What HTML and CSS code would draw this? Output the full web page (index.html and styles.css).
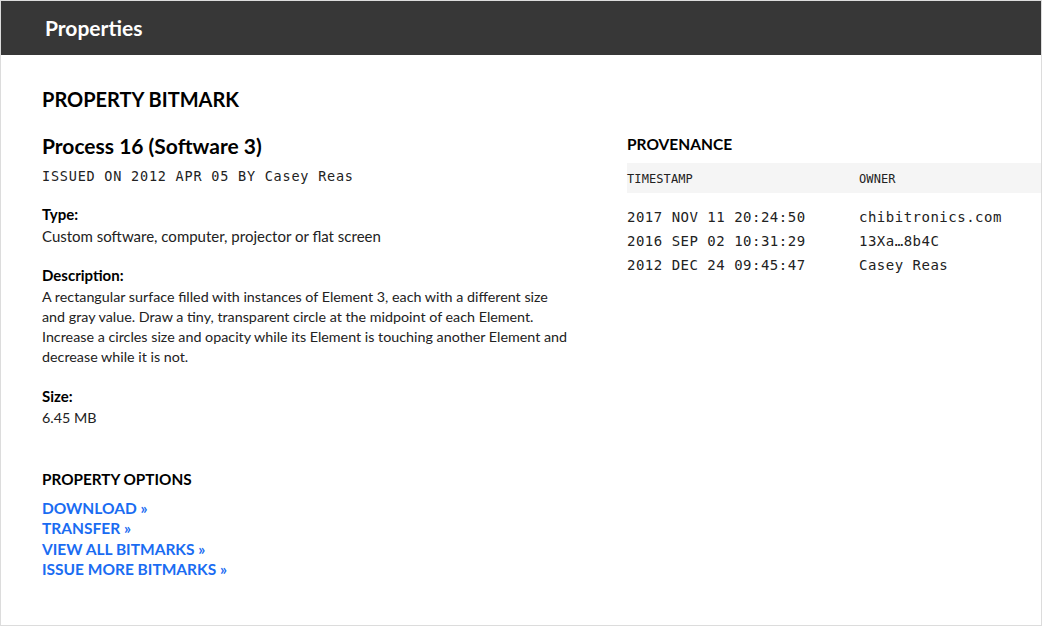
FILE: index.html
```html
<!DOCTYPE html>
<html>
<head>
<meta charset="utf-8">
<link rel="stylesheet" href="styles.css">
</head>
<body>
<div class="frame">
  <header class="topbar"><h1 class="topbar-title">Properties</h1></header>
  <main class="content">
    <h2 class="page-title">PROPERTY BITMARK</h2>
    <div class="columns">
      <section class="details">
        <h3 class="work-title">Process 16 (Software 3)</h3>
        <p class="issued">ISSUED ON 2012 APR 05 BY Casey Reas</p>
        <div class="field">
          <div class="field-label">Type:</div>
          <div class="field-value field-value-lg">Custom software, computer, projector or flat screen</div>
        </div>
        <div class="field">
          <div class="field-label">Description:</div>
          <div class="field-value field-value-desc">A rectangular surface filled with instances of Element 3, each with a different size and gray value. Draw a tiny, transparent circle at the midpoint of each Element. Increase a circles size and opacity while its Element is touching another Element and decrease while it is not.</div>
        </div>
        <div class="field">
          <div class="field-label">Size:</div>
          <div class="field-value">6.45 MB</div>
        </div>
        <h4 class="options-title">PROPERTY OPTIONS</h4>
        <ul class="options">
          <li><a href="#">DOWNLOAD »</a></li>
          <li><a href="#">TRANSFER »</a></li>
          <li><a href="#">VIEW ALL BITMARKS »</a></li>
          <li><a href="#">ISSUE MORE BITMARKS »</a></li>
        </ul>
      </section>
      <section class="provenance">
        <h4 class="prov-title">PROVENANCE</h4>
        <div class="prov-head">
          <span class="col-ts">TIMESTAMP</span>
          <span class="col-owner">OWNER</span>
        </div>
        <div class="prov-rows">
          <div class="prov-row"><span class="col-ts">2017 NOV 11 20:24:50</span><span class="col-owner">chibitronics.com</span></div>
          <div class="prov-row"><span class="col-ts">2016 SEP 02 10:31:29</span><span class="col-owner">13Xa…8b4C</span></div>
          <div class="prov-row"><span class="col-ts">2012 DEC 24 09:45:47</span><span class="col-owner">Casey Reas</span></div>
        </div>
      </section>
    </div>
  </main>
</div>
</body>
</html>
```
FILE: styles.css
```css
* { box-sizing: border-box; }
html, body { margin: 0; padding: 0; background: #fff; }
body { font-family: Lato, "Noto Sans", sans-serif; color: #111; }
.frame {
  width: 1042px;
  height: 626px;
  border: 1px solid #dcdcdc;
  background: #fff;
}
.topbar {
  height: 54px;
  background: #373737;
  display: flex;
  align-items: center;
  padding-left: 44px;
}
.topbar-title {
  margin: 0;
  color: #fff;
  font-size: 21px;
  font-weight: 700;
  padding-bottom: 1px;
}
.content { padding: 33px 0 0 41px; }
.page-title {
  margin: 0;
  font-size: 20px;
  font-weight: 700;
  line-height: 22px;
  color: #000;
}
.columns {
  display: grid;
  grid-template-columns: 544px 1fr;
  column-gap: 41px;
  margin-top: 24px;
}
.work-title {
  margin: 0;
  font-size: 21px;
  font-weight: 700;
  line-height: 24px;
  color: #000;
}
.issued {
  margin: 9px 0 0;
  font-family: "DejaVu Sans Mono", monospace;
  font-size: 13.5px;
  line-height: 18px;
  letter-spacing: 0.78px;
  color: #222;
}
.field { margin-top: 19px; }
.field + .field { margin-top: 19px; }
.field-label {
  font-size: 15px;
  font-weight: 700;
  line-height: 20px;
  color: #000;
}
.field-value {
  font-size: 14.3px;
  line-height: 20px;
  color: #222;
}
.field-value-lg { font-size: 15px; }
.field-value-desc { max-width: 531px; }
.field-label + .field-value { margin-top: 2px; }
.options-title {
  margin: 41px 0 0;
  font-size: 15.3px;
  font-weight: 700;
  line-height: 20px;
  color: #000;
}
.options {
  list-style: none;
  margin: 9px 0 0;
  padding: 0;
}
.options li { line-height: 20.3px; }
.options a {
  color: #1a6cf2;
  font-size: 15.5px;
  font-weight: 700;
  text-decoration: none;
}
.prov-title {
  margin: 0;
  font-size: 15.5px;
  font-weight: 700;
  line-height: 20px;
  color: #000;
}
.prov-head {
  display: flex;
  margin-top: 9px;
  height: 30px;
  align-items: center;
  background: #f5f5f5;
  font-family: "DejaVu Sans Mono", monospace;
  font-size: 12px;
  letter-spacing: 0.1px;
  color: #222;
  padding-top: 1px;
}
.col-ts { width: 232px; flex: none; }
.prov-rows { margin-top: 12px; }
.prov-row {
  display: flex;
  font-family: "DejaVu Sans Mono", monospace;
  font-size: 14px;
  line-height: 24px;
  letter-spacing: 0.5px;
  color: #222;
}
```
